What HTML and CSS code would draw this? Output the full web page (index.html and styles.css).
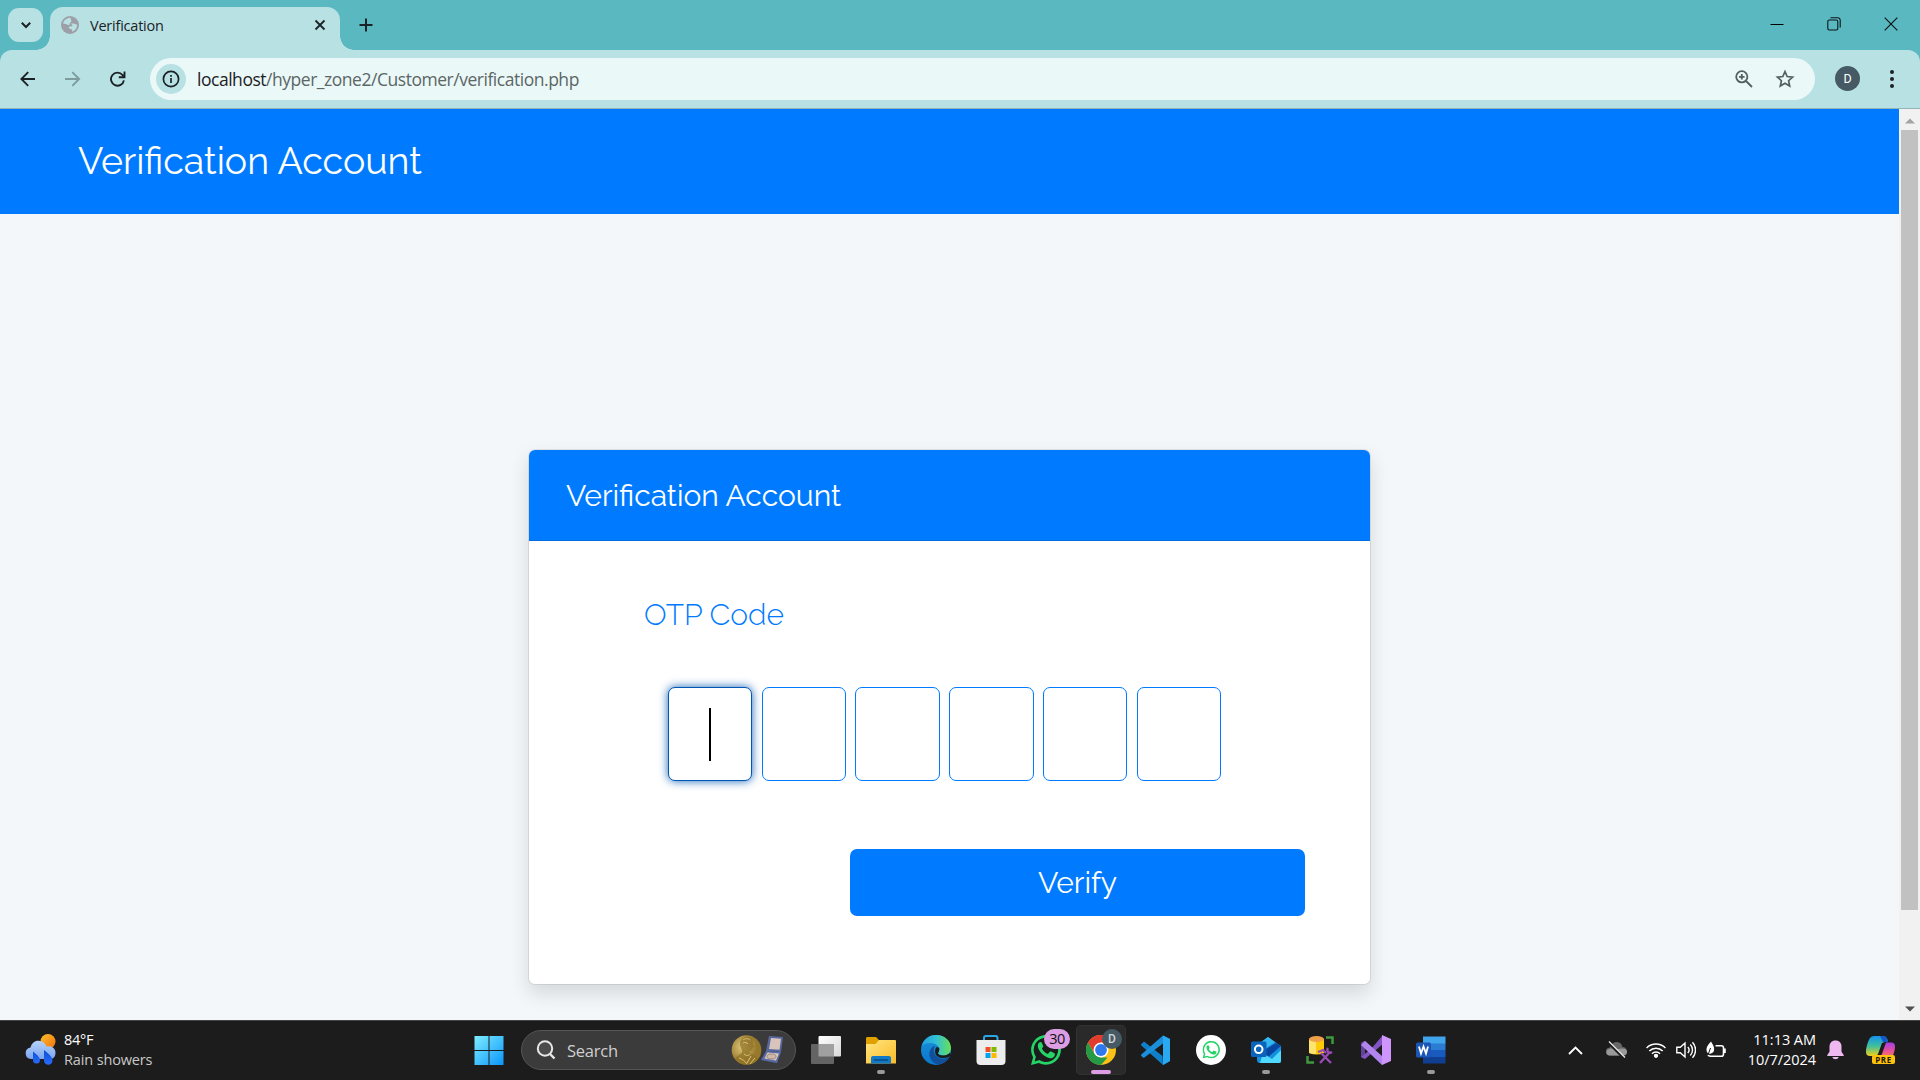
FILE: index.html
```
<!DOCTYPE html>
<html lang="en">
<head>
<meta charset="utf-8">
<title>Verification</title>
<link rel="stylesheet" href="styles.css">
</head>
<body>
<div class="tabstrip">
  <div class="tab-search"><svg width="12" height="12" viewBox="0 0 12 12"><path d="M1.8 3.8 6 8l4.200-4.200" fill="none" stroke="#1c2224" stroke-width="2"/></svg></div>
  <div class="tab">
    <svg class="globe" width="18" height="18" viewBox="0 0 18 18"><circle cx="9" cy="9" r="9" fill="#9c9fa5"/><path d="M9.500 1.800C6 1.800 3 4 2 7.500c2 .3 3.800.3 4.500 1.300.6.8 2.300.4 2.300-1.300 0-1.200 1-1.100 1.500-2 .5-1-.8-1.500-.8-3.700zM10 7.600c1.500-.5 3.500.2 6 .8.300 3-1.500 6-5 7.300.6-1.500.2-2.200-1.600-2.600-2-.5-2-2-.7-2.600 1.500-.5 2.800 0 2.700-1.300 0-.8-1.300-.6-1.400-1.600z" fill="#b8e1e4"/></svg>
    <span class="tab-title">Verification</span>
    <svg class="tab-close" width="12" height="12" viewBox="0 0 12 12"><path d="m1.500 1.500 9 9m0-9-9 9" stroke="#1c2224" stroke-width="1.800"/></svg>
  </div>
  <svg class="new-tab" width="14" height="14" viewBox="0 0 14 14"><path d="M7 .5v13M.5 7h13" stroke="#1c2224" stroke-width="2"/></svg>
  <div class="window-buttons">
    <svg width="14" height="14" viewBox="0 0 14 14"><path d="M.5 7.500h13" stroke="#000"/></svg>
    <svg width="14" height="14" viewBox="0 0 14 14" fill="none" stroke="#0a1516" stroke-width="1.100"><rect x=".8" y="3" width="10" height="10" rx="1.500"/><path d="M3.500.7h7.200a2.500 2.500 0 0 1 2.500 2.500v7.300"/></svg>
    <svg width="14" height="14" viewBox="0 0 14 14"><path d="m.7.700 12.600 12.600m0-12.600L.7 13.300" stroke="#0a1516" stroke-width="1.200"/></svg>
  </div>
</div>
<div class="toolbar">
  <div class="nav">
    <svg width="16" height="16" viewBox="0 0 16 16"><path d="M15 8H2M8.200 1.200 1.400 8l6.800 6.800" fill="none" stroke="#1c2224" stroke-width="1.900"/></svg>
    <svg width="16" height="16" viewBox="0 0 16 16"><path d="M0 8H13.500M7.300 1.200 14.100 8l-6.800 6.800" fill="none" stroke="#7e9b9e" stroke-width="1.900"/></svg>
    <svg width="16" height="16" viewBox="0 0 16 16"><path d="M13.900 9.300A6.500 6.500 0 1 1 12.500 4L14 5.500M14.500.5v5.700H8.800" fill="none" stroke="#1c2224" stroke-width="1.900"/></svg>
  </div>
  <div class="omnibox">
    <div class="site-info"><svg width="18" height="18" viewBox="0 0 18 18"><circle cx="9" cy="9" r="7.600" fill="none" stroke="#1c2224" stroke-width="1.700"/><path d="M9 8v5M9 5v1.800" stroke="#1c2224" stroke-width="1.700"/></svg></div>
    <span class="url"><b>localhost</b>/hyper_zone2/Customer/verification.php</span>
    <svg class="zoom" width="18" height="18" viewBox="0 0 18 18" fill="none" stroke="#53605f" stroke-width="1.800"><circle cx="6.800" cy="6.800" r="5.600"/><path d="m11 11 6 6M6.800 4v5.600M4 6.800h5.600"/></svg>
    <svg class="star" width="20" height="20" viewBox="0 0 20 20"><path d="m10 2.600 2.200 4.900 5.400.6-4 3.600 1.100 5.300-4.700-2.700L5.300 17l1.100-5.300-4-3.600 5.400-.6z" fill="none" stroke="#53605f" stroke-width="1.700"/></svg>
  </div>
  <div class="avatar">D</div>
  <svg class="menu" width="6" height="20" viewBox="0 0 6 20" fill="#1c2224"><circle cx="3" cy="3" r="2"/><circle cx="3" cy="10" r="2"/><circle cx="3" cy="17" r="2"/></svg>
</div>
<div class="viewport">
  <main class="page">
    <header class="page-header"><h1>Verification Account</h1></header>
    <section class="card">
      <h2 class="card-header">Verification Account</h2>
      <form class="card-body">
        <label class="otp-label">OTP Code</label>
        <div class="otp">
          <div class="digit focused"><span class="caret"></span></div><div class="digit"></div><div class="digit"></div><div class="digit"></div><div class="digit"></div><div class="digit"></div>
        </div>
        <div class="verify"><span>Verify</span></div>
      </form>
    </section>
  </main>
  <div class="scrollbar">
    <svg width="10" height="6" viewBox="0 0 10 6"><path d="M0 5.500 5 .5l5 5z" fill="#a3a3a3"/></svg>
    <div class="track"><div class="thumb"></div></div>
    <svg width="10" height="6" viewBox="0 0 10 6"><path d="M0 .5h10l-5 5z" fill="#505050"/></svg>
  </div>
</div>
<footer class="taskbar">
  <div class="weather">
    <svg width="31" height="32" viewBox="0 0 31 32"><defs><linearGradient id="sun" x2="1" y2="1"><stop stop-color="#fbc02d"/><stop offset="1" stop-color="#f2700d"/></linearGradient><linearGradient id="cl" x2="0" y2="1"><stop stop-color="#b5d2fb"/><stop offset="1" stop-color="#7ba5ee"/></linearGradient><linearGradient id="drop" x2="0" y2="1"><stop stop-color="#0a4fd0"/><stop offset="1" stop-color="#2a6cff"/></linearGradient></defs><circle cx="23" cy="8.500" r="7.500" fill="url(#sun)"/><path d="M6 26a5.800 5.800 0 0 1-.5-11.500C7 9.500 10.500 7 15 8c3.500.5 5.500 3 6.500 5.500 5-1 9 2 9 6.200C30.500 24 28 26 25 26z" fill="url(#cl)"/><path d="M8 18.500c3 2.500 7 5.500 7 8.500a3.500 3.500 0 0 1-7 0zM19 17c4 3 8.500 7 8.500 10.500a4.200 4.200 0 0 1-8.500 0z" fill="url(#drop)"/></svg>
    <div class="weather-text"><span class="temp">84°F</span><span class="cond">Rain showers</span></div>
  </div>
  <div class="apps">
    <div class="app"><svg width="30" height="30" viewBox="0 0 30 30"><defs><linearGradient id="win" x1="0" y1="0" x2="30" y2="30" gradientUnits="userSpaceOnUse"><stop stop-color="#80f0ff"/><stop offset="1" stop-color="#0a94fb"/></linearGradient></defs><path d="M.5 1h14v14H.5zM15.500 1h14v14h-14zM.5 16h14v14H.5zM15.500 16h14v14h-14z" fill="url(#win)"/></svg></div>
    <div class="search">
      <svg width="20" height="20" viewBox="0 0 20 20"><circle cx="9" cy="8.500" r="7.200" fill="#4c4c4c" stroke="#e8e8e8" stroke-width="2"/><path d="m14 14 4.500 4.500" stroke="#e8e8e8" stroke-width="2.400"/></svg>
      <span>Search</span>
      <svg class="medal" width="54" height="32" viewBox="0 0 54 32"><defs><radialGradient id="gold" cx=".35" cy=".4"><stop stop-color="#dfc779"/><stop offset="1" stop-color="#98792c"/></radialGradient></defs><circle cx="15.500" cy="16" r="14.800" fill="url(#gold)"/><path d="M11 5c3-3 8-3 10-.5 1.500 2 .5 4 1 6l1.500 2.500-2 .8c.3 2.500-.8 3.200-3 3l.5 3c4 1 7 3 8 5-3 4-7 6-11.500 6-5 0-9-2-11.500-6 2-3 5-4 7-6 .5-2-.5-3-1-5-1.500-3-1-7 1-8.800z" fill="#8d7026" opacity=".7"/><path d="M12 6c2-1.500 5-2 7.500 0M12 9c2-1 4-.5 5 1M8 24c3 1 6 3 8 6M13 20c2 2 5 2 6 0M20 22l-4 7M24 24l-5 6" stroke="#dcc475" stroke-width="1" fill="none"/><path d="m38 2 14 1-2 15-15-1z" fill="#58689f"/><path d="m40 4 10 .8-1.500 11-10.500-.7z" fill="#d8c4ba"/><path d="m35 17 15 1-4 11-16-3z" fill="#586aa8"/><path d="m36.500 18.500 11.500 1-3 7-11.500-2z" fill="#dcc9bd"/><ellipse cx="40.500" cy="22.500" rx="4.500" ry="2.500" fill="#cdb8a9" stroke="#89776d" stroke-width=".8"/></svg>
    </div>
    <div class="app"><svg width="30" height="30" viewBox="0 0 30 30"><defs><linearGradient id="tv" x2="1" y2="1"><stop stop-color="#fff"/><stop offset="1" stop-color="#d8d8d8"/></linearGradient></defs><rect x="7.500" y="1" width="22.500" height="20.500" rx="1" fill="url(#tv)"/><rect y="9" width="23" height="20" rx="1" fill="#646464"/><path d="M7.500 9H23v12.500H7.500z" fill="#a0a0a0"/></svg></div>
    <div class="app running"><svg width="30" height="30" viewBox="0 0 30 30"><defs><linearGradient id="fold" x2="1" y2="1"><stop stop-color="#ffe680"/><stop offset="1" stop-color="#fabb27"/></linearGradient></defs><path d="M0 3.500C0 2.500.7 2 1.500 2H10l3 3h15v8H0z" fill="#e0a000"/><path d="M0 9h9.500L13 5h16q1 0 1 1v22.500H0z" fill="url(#fold)"/><path d="M5 28.500V23q0-2 2-2h16q2 0 2 2v5.500z" fill="#1079c8"/><path d="M8 25h14" stroke="#0a4b80" stroke-width="1.500"/></svg></div>
    <div class="app"><svg width="30" height="30" viewBox="0 0 30 30"><defs><linearGradient id="e1" x2="1"><stop stop-color="#1f9ee5"/><stop offset=".5" stop-color="#32c0d5"/><stop offset="1" stop-color="#69e053"/></linearGradient><linearGradient id="e2" x2="0" y2="1"><stop stop-color="#1c8fd8"/><stop offset="1" stop-color="#0878cc"/></linearGradient></defs><circle cx="15" cy="15" r="15" fill="url(#e2)"/><path d="M.5 11.500C2 4.500 8 0 15 0c9 0 15 6 15 13 0 5-4 7.500-7.500 7.500-3.500 0-5.500-1-5.500-2.200 0-1 1.500-1.600 1.500-4C18.500 11 14 8 9.500 8 5.500 8 2 9.500.5 11.500z" fill="url(#e1)"/><path d="M13 11c-5 3-6 9-3 13.500 2.500 4 6 5.500 9 4.800 4-1 7-3.800 8.500-6.300.3-.6-.2-.8-.8-.5-4 2-9 1.500-11.700-1.700C12.500 18 12 14 14 11.500z" fill="#124f9b"/><path d="M17 18.300c0 1.200 2 2.200 5.500 2.200 2 0 4.200-.8 6.500-2.500l1 2-2.500 2.300c-4.500 1.500-9.500 1-12.300-2C13.500 18 13.800 14 15.500 12c4 0 3 3.500 1.500 6.300z" fill="#1c1c1c"/></svg></div>
    <div class="app"><svg width="30" height="30" viewBox="0 0 30 30"><path d="M8 6V3q0-2 2-2h9.500q2 0 2 2v3" fill="none" stroke="#29a8e8" stroke-width="2"/><path d="M.5 5h29v21q0 4-4 4h-21q-4 0-4-4z" fill="#ededed"/><path d="M9.500 12h5v5h-5z" fill="#f25022"/><path d="M15.500 12h5v5h-5z" fill="#7fba00"/><path d="M9.500 18h5v5h-5z" fill="#00a4ef"/><path d="M15.500 18h5v5h-5z" fill="#ffb900"/></svg></div>
    <div class="app"><svg width="30" height="30" viewBox="0 0 30 30"><use href="#wa" fill="#25d366"/></svg><span class="badge">30</span></div>
    <div class="app active"><svg width="30" height="30" viewBox="0 0 30 30"><circle cx="15" cy="15" r="15" fill="#fbc116"/><path d="M2 7.500A15 15 0 0 1 28 7.500H15l-6.500 11z" fill="#e33b2e"/><path d="M2 7.500 8.500 18.700 15 22.500h6.500L15 30A15 15 0 0 1 2 7.500z" fill="#249a46"/><circle cx="15" cy="15" r="7.500" fill="#fff"/><circle cx="15" cy="15" r="5.900" fill="#2f78ee"/></svg><span class="profile">D</span></div>
    <div class="app"><svg width="30" height="30" viewBox="0 0 30 30"><path d="M22 .5 29 4v22l-7 4-.5-9L3 6.500.3 9q-.6.700 0 1.400L22 30z" fill="#0f7fc9"/><path d="M22 .5.3 19.500q-.6.800 0 1.500L2 22.500q.7.500 1.400 0L22 8.500z" fill="#1a8fdb"/><path d="M22 .5 29 4v22l-7 4z" fill="#2aa9f3"/></svg></div>
    <div class="app"><svg width="30" height="30" viewBox="0 0 30 30"><circle cx="15" cy="15" r="15" fill="#fff"/><svg x="6.500" y="6" width="17.500" height="17.500" viewBox="0 0 30 30"><use href="#wa" fill="#25d366"/></svg></svg></div>
    <div class="app running"><svg width="30" height="30" viewBox="0 0 30 30"><path d="M6 10 17 2l13 9v15q0 2-2 2H9q-3 0-3-3z" fill="#1490df"/><path d="m6 10 11-8 7 5-13 9z" fill="#35b6ee"/><path d="m30 11-14 12-6-6L25 8z" fill="#0747a1"/><path d="m12 18 9 6 9-9v11q0 2-2 2H9z" fill="#50d9ff"/><rect y="6.500" width="15.500" height="15.500" rx="1.500" fill="#0a64bd"/><circle cx="7.700" cy="14.300" r="3.800" fill="none" stroke="#fff" stroke-width="2"/></svg></div>
    <div class="app"><svg width="30" height="30" viewBox="0 0 30 30"><path d="M3 4h15v14q-7 3-15 0z" fill="#fccb05"/><path d="M3 4h7v15q-4 0-7-1z" fill="#ffe36f"/><ellipse cx="10.500" cy="4" rx="7.500" ry="3" fill="#f1a04a"/><path d="M20 2.500h6.500V9M1.500 21v6.500H8" fill="none" stroke="#3f983e" stroke-width="2.500"/><path d="m14 28 10-11m-9 1 10 10M12 17l5-2 3 3M22 13c-2 3 1 6 4 4" fill="none" stroke="#994cb5" stroke-width="2.300"/></svg></div>
    <div class="app"><svg width="30" height="30" viewBox="0 0 30 30"><path d="M0 8 4 6l18 17v7z" fill="#aa79e7"/><path d="m0 8 4-2v18l-4-2z" fill="#62439a"/><path d="M4 24 22 9V0L10 14 0 22z" fill="#8254c4"/><path d="m4 6 17 15v9L0 10z" fill="#b285ed"/><path d="m21 0 9 4v22l-9 4z" fill="#ce95fc"/></svg></div>
    <div class="app running"><svg width="30" height="30" viewBox="0 0 30 30"><path d="M7 1.500h22.500V9H7z" fill="#41a5ee"/><path d="M7 8.500h22.500V15H7z" fill="#2b7cd3"/><path d="M7 15h22.500v7H7z" fill="#185abd"/><path d="M7 22h22.500v6.500H7z" fill="#103f91"/><rect y="7.500" width="15" height="15" rx="1.500" fill="#1b55b5"/><path d="m3 11.500 2 7 2.500-7 2.500 7 2-7" fill="none" stroke="#fff" stroke-width="1.800"/></svg></div>
  </div>
  <div class="tray">
    <svg class="chev" width="15" height="9" viewBox="0 0 15 9"><path d="M1 8l6.500-6.500L14 8" fill="none" stroke="#fff" stroke-width="1.800"/></svg>
    <svg class="cloud" width="21" height="18" viewBox="0 0 21 18"><path d="M4 14.500a4 4 0 0 1-.3-8C5 3 8 1 11 1c3 .3 5 2 5.500 5 2.500 0 4.500 2 4.500 4.500s-2 4-4 4z" fill="#666"/><path d="M4 14.500C0 14.500-.5 10 2 8.500c4-2 7 0 10-.5 4-1 9-1 9 2.500s-2 4-4 4z" fill="#999"/><path d="m2 1 16 16" stroke="#1c1c1c" stroke-width="3"/><path d="m3 .5 16 16" stroke="#eee" stroke-width="1.300"/></svg>
    <svg class="wifi" width="20" height="16" viewBox="0 0 20 16" fill="none" stroke="#fff" stroke-width="1.500"><path d="M.6 6a13.200 13.200 0 0 1 18.800 0M3.300 9a9.500 9.500 0 0 1 13.400 0M6 11.800a5.600 5.600 0 0 1 8 0"/><circle cx="10" cy="13.800" r="1.400" fill="#fff"/></svg>
    <svg class="sound" width="20" height="18" viewBox="0 0 20 18" fill="none" stroke="#fff" stroke-width="1.400"><path d="M.8 6.200h3.500L9 2v14l-4.700-4.200H.8zM11.800 6a4.500 4.500 0 0 1 0 6M14.300 3.500a8 8 0 0 1 0 11M16.500 1.200a11.500 11.500 0 0 1 0 15.600"/></svg>
    <svg class="batt" width="21" height="18" viewBox="0 0 21 18"><path d="M9.500 4.700h5.800q2.200 0 2.200 2.200v6q0 2.300-2.200 2.300H4.500q-2 0-2.400-1.500M19 7.500v4.500" fill="none" stroke="#fff" stroke-width="1.600"/><path d="M5 .5C3 3 .5 5 .5 9c0 3 2.500 4.500 4.500 3.500C8 11.500 9 9 7.500 5 7 3.500 6 2.500 5 .5z" fill="#fff"/><path d="M4.500 7 2 14" stroke="#1c1c1c"/></svg>
    <div class="clock"><span class="time">11:13 AM</span><span class="date">10/7/2024</span></div>
    <svg class="bell" width="17" height="20" viewBox="0 0 17 20"><path d="M8.500.5c4 0 6 2.700 6 6v5.200l2.200 3.200v1H.3v-1l2.200-3.200V6.500c0-3.300 2-6 6-6zM5.300 17h6.400c-1 3-5.400 3-6.400 0z" fill="#efb8f1"/></svg>
    <div class="copilot"><svg width="30" height="30" viewBox="0 0 30 30"><defs><linearGradient id="c1" x2="0" y2="1"><stop stop-color="#1593f0"/><stop offset=".5" stop-color="#3ebf9c"/><stop offset="1" stop-color="#f0d21c"/></linearGradient><linearGradient id="c2" x2="0" y2="1"><stop stop-color="#a23fe8"/><stop offset=".5" stop-color="#e95196"/><stop offset="1" stop-color="#fa8a46"/></linearGradient></defs><path d="M8 1h9c3 0 4 2 5 5l-6 2-4 11q-1 2-3 2H4q-4 0-4-4C0 12 2 6 4 3q1.500-2 4-2z" fill="url(#c1)"/><path d="M14 1h4c2 0 3 2 4 6h-5z" fill="#1359ca"/><path d="M20 7.500h5q4 0 4 4c0 5-2 9-4 12l-11 1z" fill="url(#c2)"/></svg><span>PRE</span></div>
  </div>
</footer>
<svg class="symbols" width="0" height="0"><symbol id="wa" viewBox="0 0 30 30"><path fill-rule="evenodd" d="M0 30 2.100 22.300A14.900 14.900 0 1 1 7.800 27.900zM8.300 25.100A12.200 12.200 0 1 0 4.900 21.800L3.600 26.400z"/><path d="M8.200 7.600c.7-.7 2-.7 2.500 0l1.500 3.500c.2.700-.2 1.200-1.300 2.400 1.500 3 3.500 4.500 6 5.500l1.900-2.200c.4-.4.8-.4 1.300-.2l3.400 1.600c.6.400.5 1.600 0 2.700-1.400 2.500-4.500 2.700-7 1.700C12 20.500 9 17.500 7.300 13.500c-.9-2.300-.4-4.700.9-5.900z"/></symbol></svg>
</body>
</html>
```
FILE: styles.css
```
* { box-sizing: border-box; }
body {
  margin: 0;
  width: 1920px;
  height: 1080px;
  display: flex;
  flex-direction: column;
  overflow: hidden;
  background: #5ab8c1;
  font-family: "Open Sans", "Noto Sans", sans-serif;
}
svg { display: block; flex: none; }
.symbols { position: absolute; }

/* browser tab strip */
.tabstrip { height: 50px; flex: none; display: flex; padding-left: 8px; }
.tab-search {
  width: 35px; height: 34px; margin-top: 8px; border-radius: 11px;
  background: #b8e1e4; display: flex; align-items: center; justify-content: center;
}
.tab {
  position: relative; width: 290px; height: 43px; margin: 7px 0 0 7px; padding: 0 14px 7px 11px;
  background: #b8e1e4; border-radius: 13px 13px 0 0; display: flex; align-items: center;
}
.tab::before, .tab::after {
  content: ""; position: absolute; bottom: 0; width: 14px; height: 14px;
}
.tab::before { left: -14px; background: radial-gradient(circle at 0 0, transparent 13.500px, #b8e1e4 14px); }
.tab::after { right: -14px; background: radial-gradient(circle at 100% 0, transparent 13.500px, #b8e1e4 14px); }
.tab-title { flex: 1; margin-left: 11px; font-size: 14.500px; letter-spacing: -0.22px; color: #1c2224; }
.new-tab { margin: 18px 0 0 19px; }
.window-buttons { margin: 17px 22px 0 auto; display: flex; gap: 43px; }

/* toolbar */
.toolbar {
  height: 59px; flex: none; display: flex; align-items: center; padding-bottom: 1px;
  background: #b8e1e4; border-radius: 12px 12px 0 0; border-bottom: 1px solid #93b4b7;
}
.nav { display: flex; gap: 29px; margin-left: 20px; width: 130px; }
.omnibox {
  width: 1665px; height: 42px; border-radius: 21px; background: #ebf8f8;
  display: flex; align-items: center; padding: 0 20px 0 6px;
}
.site-info {
  width: 30px; height: 30px; border-radius: 50%; background: #b8e1e4;
  display: flex; align-items: center; justify-content: center;
}
.url { flex: 1; margin: 1px 0 0 11px; font-size: 17.500px; letter-spacing: -0.47px; color: #5b6666; }
.url b { font-weight: 400; color: #1c2224; }
.star { margin-left: 22px; }
.avatar {
  width: 25px; height: 25px; margin-left: 20px; border-radius: 50%; background: #455a64; color: #fff;
  font: 12.500px/25px Roboto, sans-serif; text-align: center;
}
.menu { margin-left: 29px; }

/* page */
.viewport { flex: 1; display: flex; min-height: 0; }
.page {
  width: 1899px; background: #f3f7fa; overflow: hidden;
  font-family: Raleway, Lato, sans-serif;
}
.page-header { height: 105px; padding: 25px 78px; background: #007bff; color: #fff; }
.page-header h1 { margin: 0; font-size: 37.500px; line-height: 54px; font-weight: 400; }
.card {
  width: 843px; height: 536px; margin: 235px 0 0 528px; border: 1px solid rgba(0,0,0,.075); border-radius: 7px;
  background: #fff; background-clip: padding-box; box-shadow: 0 9px 19px rgba(0,0,0,.12);
}
.card-header {
  height: 91px; margin: 0; padding-left: 37px; border-radius: 6px 6px 0 0; border-bottom: 1px solid #006fe6;
  background: #007bff; color: #fff; font-size: 30px; line-height: 91px; font-weight: 400;
}
.card-body { padding: 49px 65px 0 115px; display: flex; flex-direction: column; }
.otp-label { height: 50px; font-size: 30px; line-height: 50px; font-weight: 300; color: #007bff; }
.otp { display: flex; gap: 9.350px; margin: 47px 0 0 24px; }
.digit {
  width: 84.400px; height: 94px; border: 1px solid #007bff; border-radius: 7px; background: #fff;
  display: flex; align-items: center; justify-content: center;
}
.focused { border-color: #0056b3; box-shadow: 0 0 10px rgba(0,86,179,.9); }
.caret { width: 2px; height: 53px; background: #000; }
.verify {
  align-self: flex-end; width: 455px; height: 67px; margin-top: 68px; border-radius: 7px;
  background: #007bff; color: #fff; font-size: 30px; line-height: 67px; text-align: center;
}
.scrollbar {
  width: 21px; background: #f1f1f1; display: flex; flex-direction: column; align-items: center; padding: 9px 0 8px;
}
.track { flex: 1; padding-top: 6px; }
.thumb { width: 17px; height: 780px; background: #c1c1c1; }

/* taskbar */
.taskbar {
  height: 60px; flex: none; display: flex; background: #1c1c1c; border-top: 1px solid #434343; color: #fff;
}
.weather { width: 462px; padding: 12px 0 0 25px; display: flex; gap: 8px; }
.weather-text { display: flex; flex-direction: column; margin-top: -3px; }
.weather-text span { font-size: 14.500px; line-height: 20px; }
.temp { letter-spacing: -0.3px; }
.cond { color: #c9c9c9; letter-spacing: -0.14px; }
.apps { height: 58px; display: flex; align-items: center; }
.app {
  position: relative; width: 50px; height: 50px; margin-right: 5px; border-radius: 5px;
  display: flex; align-items: center; justify-content: center;
}
.app:first-child { width: 54px; }
.search {
  width: 275px; height: 40px; margin-right: 5px; padding: 0 10px 0 14px; border: 1px solid #555; border-radius: 20px;
  background: #3b3b3b; display: flex; align-items: center;
}
.search span { flex: 1; margin-left: 11px; font-size: 16.500px; letter-spacing: -0.25px; color: #cfcfcf; }
.active { background: #2a2a2a; box-shadow: inset 0 0 0 1px #323232; }
.running::after, .active::after {
  content: ""; position: absolute; bottom: 1px; left: 21px; width: 8px; height: 4px; border-radius: 2px; background: #999;
}
.active::after { left: 15px; width: 20px; background: #dc9de4; }
.badge {
  position: absolute; left: 23px; top: 4px; width: 26px; height: 20px; border-radius: 10px;
  background: #dc9de4; color: #111; font-size: 14.500px; line-height: 20px; text-align: center; letter-spacing: -0.5px;
}
.profile {
  position: absolute; left: 26px; top: 4px; width: 20px; height: 20px; border-radius: 50%;
  background: #455a64; color: #cdd4d8; font: 500 12px/20px Roboto, sans-serif; text-align: center;
}
.tray { height: 58px; margin-left: auto; padding-right: 24px; display: flex; align-items: center; }
.cloud { margin-left: 23px; }
.wifi { margin-left: 19px; }
.sound { margin-left: 10px; }
.batt { margin-left: 10px; }
.clock { width: 89px; display: flex; flex-direction: column; align-items: flex-end; }
.clock span { font-size: 14.500px; line-height: 20px; letter-spacing: -0.04px; white-space: nowrap; }
.bell { margin-left: 11px; }
.copilot { position: relative; margin-left: 22px; }
.copilot span {
  position: absolute; left: 6px; top: 20px; width: 23px; height: 9px; border-radius: 2px;
  background: #ffc20e; color: #201800; font: 700 8px/9px "Open Sans", sans-serif; letter-spacing: .6px; text-align: center;
}
```
